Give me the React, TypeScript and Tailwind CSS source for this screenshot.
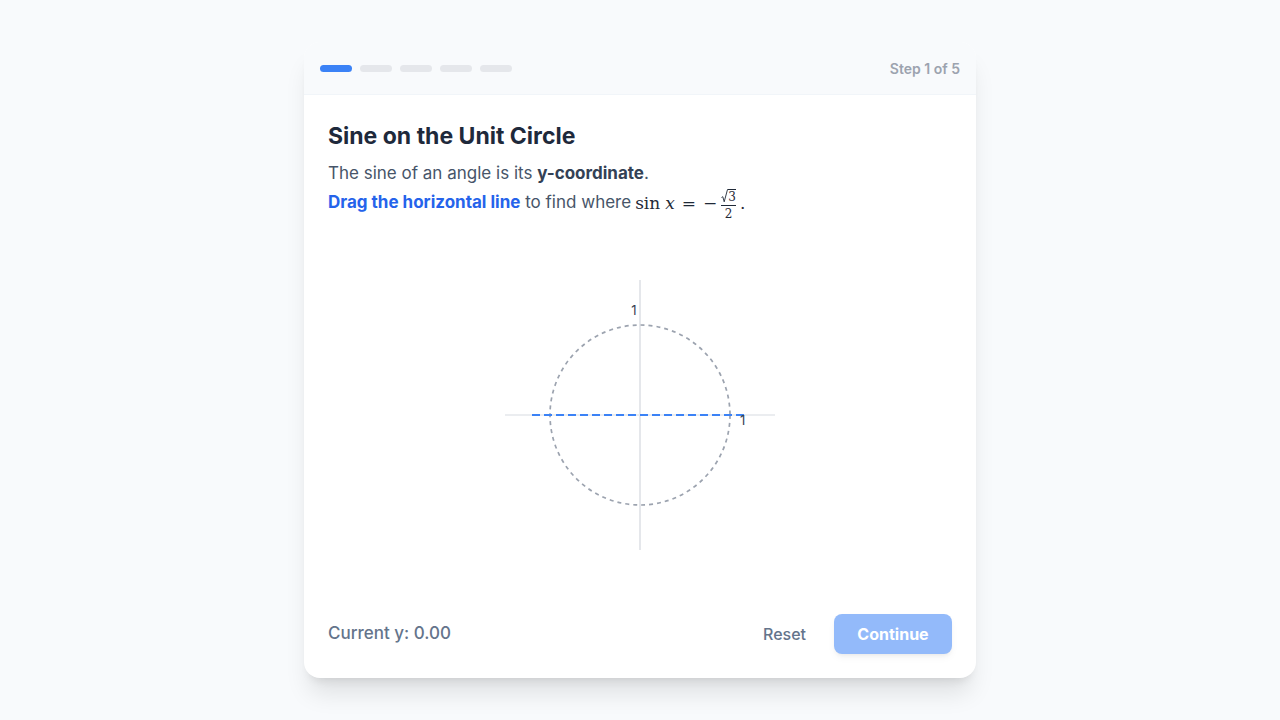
import React from "react";

function Diagram() {
  const c = 135;
  const r = 90;
  return (
    <svg width={270} height={270} viewBox="0 0 270 270">
      <line x1={0} y1={c} x2={270} y2={c} stroke="#e5e7eb" strokeWidth={1.5} />
      <line x1={c} y1={0} x2={c} y2={270} stroke="#e5e7eb" strokeWidth={2} />
      <circle cx={c} cy={c} r={r} fill="none" stroke="#9ca3af" strokeWidth={1.7} strokeDasharray="4 4" />
      <line x1={27} y1={c} x2={242} y2={c} stroke="#3b82f6" strokeWidth={2} strokeDasharray="8 4" />
      <text x={c - 6} y={c - r - 10} fontSize={13} fill="#374151" textAnchor="middle" fontFamily="Inter, sans-serif">1</text>
      <text x={c + r + 10} y={c + 10} fontSize={13} fill="#374151" textAnchor="start" fontFamily="Inter, sans-serif">1</text>
    </svg>
  );
}

function Math() {
  return (
    <span className="inline-flex items-center text-[#1f2937] align-middle ml-[4px]" style={{ fontFamily: '"DejaVu Serif", "Liberation Serif", serif' }}>
      <span className="text-[17px]">sin</span>
      <span className="text-[17px] italic ml-[5px]">x</span>
      <span className="text-[17px] ml-[7px]">=</span>
      <span className="text-[17px] ml-[7px]">−</span>
      <span className="inline-flex flex-col items-center ml-[4px] leading-none text-[12px] relative top-[1px]">
        <span className="pb-[2px] border-b border-[#1f2937] flex items-end">
          <svg width="7" height="14" viewBox="0 0 7 14" className="block">
            <path d="M0.5 8.5 L1.8 7.7 L3.2 12.8 L6.5 0.5 L7 0.5" fill="none" stroke="#1f2937" strokeWidth="0.9" />
          </svg>
          <span className="border-t border-[#1f2937] pt-[1px] leading-none">3</span>
        </span>
        <span className="pt-[2px]">2</span>
      </span>
      <span className="text-[17px] ml-[4px]">.</span>
    </span>
  );
}

export default function App() {
  return (
    <div className="min-h-screen w-full bg-[#f8fafc] flex items-center justify-center" style={{ fontFamily: 'Inter, "Noto Sans", sans-serif' }}>
      <div className="w-[672px] h-[636px] bg-white rounded-2xl shadow-xl flex flex-col overflow-hidden">
        <div className="h-[53px] shrink-0 bg-[#f8fafc] border-b border-[#f1f5f9] px-4 flex items-center justify-between">
          <div className="flex gap-2">
            <div className="w-8 h-[7px] rounded-full bg-[#3b82f6]" />
            <div className="w-8 h-[7px] rounded-full bg-[#e5e7eb]" />
            <div className="w-8 h-[7px] rounded-full bg-[#e5e7eb]" />
            <div className="w-8 h-[7px] rounded-full bg-[#e5e7eb]" />
            <div className="w-8 h-[7px] rounded-full bg-[#e5e7eb]" />
          </div>
          <div className="text-[14px] font-semibold text-[#9ca3af]">Step 1 of 5</div>
        </div>
        <div className="flex-1 flex flex-col px-6 pt-6">
          <h1 className="text-[23px] leading-8 font-bold text-[#1e293b] relative top-[1px]">Sine on the Unit Circle</h1>
          <p className="mt-2 text-[17px] leading-[29px] text-[#475569]">
            The sine of an angle is its <span className="font-bold text-[#334155]">y-coordinate</span>.
            <br />
            <span className="font-bold text-[#2563eb]">Drag the horizontal line</span> to find where<Math />
          </p>
          <div className="flex-1 flex items-center justify-center pb-[4px]">
            <Diagram />
          </div>
        </div>
        <div className="shrink-0 px-6 pb-6 flex items-center justify-between">
          <div className="text-[17px] font-medium text-[#64748b]">Current y: 0.00</div>
          <div className="flex items-center gap-4">
            <button className="px-3 py-2 text-[16px] font-medium text-[#64748b]">Reset</button>
            <button className="w-[118px] h-10 rounded-lg bg-[#3b82f6] opacity-55 text-white text-[16px] font-bold shadow-md">Continue</button>
          </div>
        </div>
      </div>
    </div>
  );
}
